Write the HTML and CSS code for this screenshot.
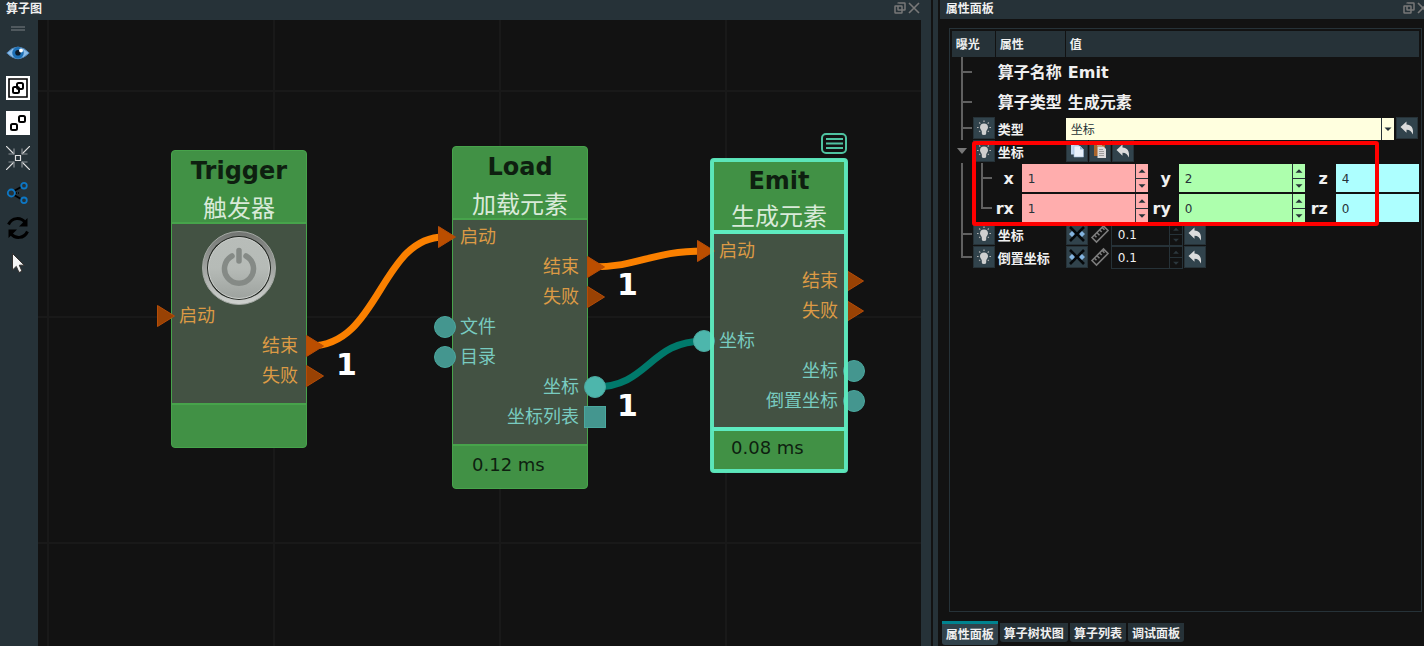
FILE: index.html
```html
<!DOCTYPE html>
<html lang="zh-CN">
<head>
<meta charset="utf-8">
<title>算子图</title>
<link rel="stylesheet" href="styles.css">
</head>
<body>
<svg class="defs" aria-hidden="true">
  <defs>
    <symbol id="restore" viewBox="0 0 12 12"><path d="M4 1.500Q4 1 4.500 1H10.500Q11 1 11 1.500V7.500Q11 8 10.500 8H8M1.500 4H7.500Q8 4 8 4.500V10.500Q8 11 7.500 11H1.500Q1 11 1 10.500V4.500Q1 4 1.500 4ZM4 4V7.500Q4 8 4.500 8H8" fill="none" stroke="#787878" stroke-width="1.500"/></symbol>
    <symbol id="close" viewBox="0 0 12 12"><path d="M1 1L11 11M11 1L1 11" fill="none" stroke="#787878" stroke-width="1.600"/></symbol>
    <symbol id="bulb" viewBox="0 0 22 22"><path d="M11 6.500a4 4 0 0 1 4 4c0 1.700-1.500 2.400-1.800 4v2q0 1.500-2.200 1.500t-2.200-1.500v-2c-.3-1.600-1.800-2.300-1.800-4a4 4 0 0 1 4-4Z" fill="#cfcfcf"/><path d="M11 3.500V5M6.200 5.500L7.300 6.600M15.800 5.500L14.700 6.600M4 10.500H5.600M16.400 10.500H18M6.200 14.800L7.200 13.900M15.800 14.800L14.800 13.900" stroke="#b4b4b4" stroke-width="1.200"/></symbol>
    <symbol id="reply" viewBox="0 0 22 22"><path d="M4.500 10L10.500 4.500V7.500C15 7.500 18 11 16.800 17.500C15.500 14.500 14 12.700 10.500 12.700V15.800Z" fill="#dcdcdc"/></symbol>
    <symbol id="copy" viewBox="0 0 22 22"><path d="M5 3.500h6l2 2v9H5z" fill="#c4d8ee"/><path d="M8 6h6l3.500 3.500V17H8z" fill="#e9f2fb" stroke="#9bb8d6" stroke-width=".6"/><path d="M14 6v3.500h3.500z" fill="#93b2d2"/></symbol>
    <symbol id="paste" viewBox="0 0 22 22"><path d="M5 3.500h11V16H5z" fill="#a8652c"/><path d="M8 2.500h5v3H8z" fill="#d5d5d5"/><path d="M8.500 6.500h6l2.500 2.500V18H8.500z" fill="#dcdcdc"/><path d="M10 9.500h4M10 11.500h5M10 13.500h5M10 15.500h5" stroke="#8e8e8e" stroke-width=".8"/></symbol>
    <symbol id="hidden" viewBox="0 0 22 22"><path d="M3 11l3-3 3 .5v5l-3 .5zM19 11l-3-3-3 .5v5l3 .5z" fill="#84b4df"/><circle cx="11" cy="11" r="2.500" fill="#34648f"/><path d="M4 4L18 18M18 4L4 18" stroke="#05080a" stroke-width="2.600"/></symbol>
    <symbol id="ruler" viewBox="0 0 22 22"><path d="M3 14.500L14.500 3L19 7.500L7.500 19ZM5.500 12.300L7.500 14.300M8 9.700L10.500 12.200M10.700 7L12.700 9M13.200 4.500L15.500 6.800" fill="none" stroke="#7c7c7c" stroke-width="1.600"/></symbol>
    <symbol id="up" viewBox="0 0 12 12"><path d="M2.500 8L6 4.500L9.500 8Z" fill="currentColor"/></symbol>
    <symbol id="down" viewBox="0 0 12 12"><path d="M2.500 4.500H9.500L6 8Z" fill="currentColor"/></symbol>
    <symbol id="tri" viewBox="0 0 18 22"><path d="M.500 .500L17.500 11L.500 21.500Z" fill="currentColor" stroke="#b54d08"/></symbol>
  </defs>
</svg>

<main class="workspace">
  <section class="dock graph-dock">
    <header class="dock-title">
      <h2>算子图</h2>
      <button class="title-btn" aria-label="浮动"><svg><use href="#restore"/></svg></button>
      <button class="title-btn" aria-label="关闭"><svg><use href="#close"/></svg></button>
    </header>
    <div class="graph-body">
      <nav class="toolbar">
        <span class="grip"></span>
        <button class="tool" aria-label="可见性"><svg viewBox="0 0 24 24"><path d="M.8 12Q12 0 23.200 12Q12 23.500 .8 12Z" fill="#8dbde8" stroke="#4f87bb"/><circle cx="12" cy="11.800" r="5.800" fill="#1c6fb5"/><circle cx="12" cy="11.800" r="2.800" fill="#0c1a28"/><circle cx="15" cy="9.500" r="2" fill="#fff"/></svg></button>
        <button class="tool" aria-label="组合"><svg viewBox="0 0 24 24"><path d="M0 0h24v24H0z" fill="#fff"/><g fill="none" stroke="#000" stroke-width="2"><path d="M3 3h18v18H3z" stroke-width="1.600"/><rect x="7" y="11" width="6" height="6" rx="1.500"/><rect x="11" y="7" width="6" height="6" rx="1.500"/></g></svg></button>
        <button class="tool" aria-label="展开"><svg viewBox="0 0 24 24"><path d="M0 0h24v24H0z" fill="#fff"/><g fill="none" stroke="#000" stroke-width="2"><rect x="5" y="13" width="6" height="6" rx="1.500"/><rect x="13" y="5" width="6" height="6" rx="1.500"/></g></svg></button>
        <button class="tool" aria-label="适应窗口"><svg viewBox="0 0 24 24"><g fill="none" stroke="#e0e0e0" stroke-width="1.200"><path d="M9.500 9.500h5v5h-5zM0 0L8 8M24 0L16 8M0 24L8 16M24 24L16 16"/><path d="M8 2.500V8H2.500M16 2.500V8H21.500M8 21.500V16H2.500M16 21.500V16H21.500" stroke="#8a9094"/></g></svg></button>
        <button class="tool" aria-label="连接"><svg viewBox="0 0 24 24"><path d="M8 10L15 6M8 14L15 18" stroke="#000" stroke-width="2"/><path d="M10 12H14" stroke="#000" stroke-width="1.500" stroke-dasharray="1 1"/><g fill="none" stroke="#0d77c4" stroke-width="1.800"><circle cx="5.300" cy="12" r="3.500"/><circle cx="18" cy="4.700" r="2.800"/><circle cx="18" cy="19.300" r="2.800"/></g></svg></button>
        <button class="tool" aria-label="刷新"><svg viewBox="0 0 24 24"><g fill="none" stroke="#000" stroke-width="3"><path d="M2.500 8.500C6 1 15 1 19 6.500"/><path d="M21.500 15.500C18 23 9 23 5 17.500"/></g><path d="M21.500 2V10.500H13ZM2.500 22V13.500H11Z"/></svg></button>
        <button class="tool" aria-label="选择"><svg viewBox="0 0 24 24"><path d="M6.500 2.500V19L10.300 15.400L13 21.500L16 20.200L13.300 14.200H18.300Z" fill="#f5f5f5" stroke="#33302e"/></svg></button>
      </nav>

      <div class="canvas">
        <svg class="wires" aria-hidden="true">
          <g fill="none" stroke-width="7">
            <path d="M272 326C342 326 342 217 406 217" stroke="#fa8000"/>
            <path d="M553 247C603 247 612 231 666 231" stroke="#fa8000"/>
            <path d="M557 367C611 367 611 321 666 321" stroke="#00796b"/>
          </g>
        </svg>

        <article class="node trigger">
          <header class="node-head"><h3>Trigger</h3><p>触发器</p></header>
          <div class="node-body">
            <button class="power" aria-label="触发">
              <svg viewBox="0 0 74 74">
                <defs>
                  <linearGradient id="ring" x2="0" y2="1"><stop offset="0" stop-color="#717471"/><stop offset=".5" stop-color="#a0a3a0"/><stop offset="1" stop-color="#cfd2cf"/></linearGradient>
                  <linearGradient id="face" x2="0" y2="1"><stop offset="0" stop-color="#b8bdb9"/><stop offset=".5" stop-color="#b6bbb7"/><stop offset="1" stop-color="#9ea39f"/></linearGradient>
                </defs>
                <circle cx="37" cy="37" r="36.500" fill="url(#ring)" stroke="#a4a9a4"/>
                <circle cx="37" cy="37" r="32" fill="#232823"/>
                <circle cx="37" cy="37" r="30.500" fill="url(#face)" stroke="#ced1ce"/>
                <path d="M30 25A14.500 14.500 0 1 0 44 25M37 19.500V30" fill="none" stroke="#858a86" stroke-width="5.500" stroke-linecap="round"/>
              </svg>
            </button>
            <div class="port in flow"><svg class="tri"><use href="#tri"/></svg>启动</div>
            <div class="port out flow live">结束<svg class="tri"><use href="#tri"/></svg></div>
            <div class="port out flow">失败<svg class="tri"><use href="#tri"/></svg></div>
          </div>
          <footer class="node-foot"></footer>
        </article>

        <article class="node load">
          <header class="node-head"><h3>Load</h3><p>加载元素</p></header>
          <div class="node-body">
            <div class="port in flow live"><svg class="tri"><use href="#tri"/></svg>启动</div>
            <div class="port out flow live">结束<svg class="tri"><use href="#tri"/></svg></div>
            <div class="port out flow">失败<svg class="tri"><use href="#tri"/></svg></div>
            <div class="port in data"><i class="dot"></i>文件</div>
            <div class="port in data"><i class="dot"></i>目录</div>
            <div class="port out data live">坐标<i class="dot"></i></div>
            <div class="port out data">坐标列表<i class="dot square"></i></div>
          </div>
          <footer class="node-foot">0.12 ms</footer>
        </article>

        <article class="node emit">
          <header class="node-head"><h3>Emit</h3><p>生成元素</p></header>
          <div class="node-body">
            <div class="port in flow live"><svg class="tri"><use href="#tri"/></svg>启动</div>
            <div class="port out flow">结束<svg class="tri"><use href="#tri"/></svg></div>
            <div class="port out flow">失败<svg class="tri"><use href="#tri"/></svg></div>
            <div class="port in data live"><i class="dot"></i>坐标</div>
            <div class="port out data">坐标<i class="dot"></i></div>
            <div class="port out data">倒置坐标<i class="dot"></i></div>
          </div>
          <footer class="node-foot">0.08 ms</footer>
        </article>

        <button class="node-menu" aria-label="节点菜单"><svg viewBox="0 0 26 22"><rect x="1" y="1" width="24" height="19" rx="4" fill="none" stroke="#4fc3a1" stroke-width="2"/><path d="M5 6H22M5 10.500H22M5 15H22" stroke="#4fc3a1" stroke-width="2"/></svg></button>
        <span class="count c1">1</span>
        <span class="count c2">1</span>
        <span class="count c3">1</span>
      </div>
    </div>
  </section>

  <div class="splitter"></div>

  <section class="dock prop-dock">
    <header class="dock-title">
      <h2>属性面板</h2>
      <button class="title-btn" aria-label="浮动"><svg><use href="#restore"/></svg></button>
      <button class="title-btn" aria-label="关闭"><svg><use href="#close"/></svg></button>
    </header>
    <div class="prop-frame">
      <table class="props">
        <thead>
          <tr><th>曝光</th><th>属性</th><th>值</th></tr>
        </thead>
        <tbody>
          <tr class="big"><td></td><td>算子名称</td><td>Emit</td></tr>
          <tr class="big"><td></td><td>算子类型</td><td>生成元素</td></tr>
          <tr>
            <td class="expose"><button class="btn" aria-label="曝光类型"><svg><use href="#bulb"/></svg></button></td>
            <td><label for="kind">类型</label></td>
            <td class="tools">
              <span class="combo"><select id="kind"><option>坐标</option></select><svg><use href="#down"/></svg></span>
              <button class="btn" aria-label="重置"><svg><use href="#reply"/></svg></button>
            </td>
          </tr>
          <tr>
            <td class="expose"><button class="btn" aria-label="曝光坐标"><svg><use href="#bulb"/></svg></button></td>
            <td>坐标</td>
            <td class="tools">
              <button class="btn" aria-label="复制"><svg><use href="#copy"/></svg></button>
              <button class="btn" aria-label="粘贴"><svg><use href="#paste"/></svg></button>
              <button class="btn" aria-label="重置"><svg><use href="#reply"/></svg></button>
            </td>
          </tr>
          <tr class="vector">
            <td colspan="3">
              <label for="x">x</label><span class="spin red"><input id="x" value="1"><button aria-label="增加"><svg><use href="#up"/></svg></button><button aria-label="减少"><svg><use href="#down"/></svg></button></span>
              <label for="y">y</label><span class="spin green"><input id="y" value="2"><button aria-label="增加"><svg><use href="#up"/></svg></button><button aria-label="减少"><svg><use href="#down"/></svg></button></span>
              <label for="z">z</label><span class="spin cyan"><input id="z" value="4"><button aria-label="增加"><svg><use href="#up"/></svg></button><button aria-label="减少"><svg><use href="#down"/></svg></button></span>
            </td>
          </tr>
          <tr class="vector">
            <td colspan="3">
              <label for="rx">rx</label><span class="spin red"><input id="rx" value="1"><button aria-label="增加"><svg><use href="#up"/></svg></button><button aria-label="减少"><svg><use href="#down"/></svg></button></span>
              <label for="ry">ry</label><span class="spin green"><input id="ry" value="0"><button aria-label="增加"><svg><use href="#up"/></svg></button><button aria-label="减少"><svg><use href="#down"/></svg></button></span>
              <label for="rz">rz</label><span class="spin cyan"><input id="rz" value="0"><button aria-label="增加"><svg><use href="#up"/></svg></button><button aria-label="减少"><svg><use href="#down"/></svg></button></span>
            </td>
          </tr>
          <tr>
            <td class="expose"><button class="btn" aria-label="曝光坐标输出"><svg><use href="#bulb"/></svg></button></td>
            <td><label for="pose">坐标</label></td>
            <td class="tools">
              <button class="btn" aria-label="隐藏"><svg><use href="#hidden"/></svg></button>
              <button class="btn plain" aria-label="尺寸"><svg><use href="#ruler"/></svg></button>
              <span class="spin dark"><input id="pose" value="0.1"><button aria-label="增加"><svg><use href="#up"/></svg></button><button aria-label="减少"><svg><use href="#down"/></svg></button></span>
              <button class="btn" aria-label="重置"><svg><use href="#reply"/></svg></button>
            </td>
          </tr>
          <tr>
            <td class="expose"><button class="btn" aria-label="曝光倒置坐标"><svg><use href="#bulb"/></svg></button></td>
            <td><label for="inv">倒置坐标</label></td>
            <td class="tools">
              <button class="btn" aria-label="隐藏"><svg><use href="#hidden"/></svg></button>
              <button class="btn plain" aria-label="尺寸"><svg><use href="#ruler"/></svg></button>
              <span class="spin dark"><input id="inv" value="0.1"><button aria-label="增加"><svg><use href="#up"/></svg></button><button aria-label="减少"><svg><use href="#down"/></svg></button></span>
              <button class="btn" aria-label="重置"><svg><use href="#reply"/></svg></button>
            </td>
          </tr>
        </tbody>
      </table>
      <svg class="branches" viewBox="0 0 44 212" aria-hidden="true"><path d="M10 0V83M10 15H20M10 45H20M10 71H20M10 106V200H20M10 177H20M30 106V151H40M30 121H40" fill="none" stroke="#606060" stroke-width="2"/><path d="M5 91H15L10 97Z" fill="#777"/></svg>
      <div class="highlight"></div>
    </div>
    <nav class="tabs">
      <button class="tab active">属性面板</button>
      <button class="tab">算子树状图</button>
      <button class="tab">算子列表</button>
      <button class="tab">调试面板</button>
    </nav>
  </section>
</main>
</body>
</html>
```

FILE: styles.css
```css
* { box-sizing: border-box; }

body {
  margin: 0;
  background: #121212;
  color: #f0f0f0;
  font: 12px "DejaVu Sans", "Noto Sans CJK SC", sans-serif;
}

button, input, select {
  margin: 0;
  padding: 0;
  border: 0;
  background: none;
  color: inherit;
  font: inherit;
}

svg { display: block; }
h2, h3, p { margin: 0; }
.defs { position: absolute; width: 0; height: 0; }

.workspace { display: flex; height: 100vh; overflow: hidden; }
.dock { display: flex; flex-direction: column; min-width: 0; }
.graph-dock { flex: 1; background: #263238; }
.prop-dock { width: 34%; overflow: hidden; }

.splitter {
  width: 9px;
  border: solid #121212;
  border-width: 0 2px;
  background: #263238;
}

.dock-title {
  display: flex;
  align-items: flex-start;
  gap: 2px;
  height: 20px;
  flex: none;
  padding: 0 11px 0 6px;
  background: #263238;
}
.dock-title h2 { flex: 1; font-size: 12px; line-height: 18px; }
.title-btn { flex: none; padding-top: 2px; }
.title-btn svg { width: 12px; height: 12px; }
.prop-dock .dock-title { height: 19px; padding: 0 0 0 6px; margin-right: -5px; }

/* Graph */
.graph-body { display: flex; flex: 1; min-height: 0; }
.toolbar {
  display: flex;
  flex-direction: column;
  align-items: center;
  gap: 11px;
  width: 38px;
  padding: 6px 2px 0 0;
}
.grip { width: 14px; height: 5px; flex: none; margin-bottom: -1px; border: solid #50595e; border-width: 2px 0; }
.tool { flex: none; }
.tool svg { width: 24px; height: 24px; }

.canvas {
  position: relative;
  flex: 1;
  margin-right: 10px;
  overflow: hidden;
  background-color: #121212;
  background-image:
    linear-gradient(to right, #191919 2px, transparent 2px),
    linear-gradient(#191919 2px, transparent 2px);
  background-size: 226px 226px;
  background-position: 9px 70px;
}
.wires { position: absolute; inset: 0; width: 100%; height: 100%; }

.node {
  position: absolute;
  width: 136px;
  border: 1px solid #47a34b;
  border-radius: 4px;
  background: #419145;
}
.trigger { left: 133px; top: 130px; }
.load { left: 414px; top: 126px; }
.emit { left: 673px; top: 139px; }

.node-head { border-bottom: 2px solid #47a34b; text-align: center; }
.node-head h3 { color: #0e1f10; font-size: 24px; line-height: 40px; }
.node-head p { margin-bottom: -5px; color: #d9ead9; font-size: 24px; line-height: 36px; }
.node-body { padding: 2px 0 12px; background: #435243; }
.node-foot {
  height: 44px;
  padding-left: 19px;
  border-top: 2px solid #47a34b;
  color: #0e1f10;
  font-size: 18px;
  line-height: 38px;
}
.power { display: block; margin: 0 auto; padding-top: 5px; height: 75px; }
.power svg { width: 74px; height: 74px; }

.port { position: relative; height: 30px; padding: 0 8px 0 7px; font-size: 18px; line-height: 30px; }
.out { text-align: right; }
.flow { color: #dc9a45; }
.data { color: #78cbc0; }
.tri { position: absolute; top: 4px; width: 18px; height: 22px; color: #994204; }
.live .tri { color: #bb4e00; }
.in .tri { left: -15px; }
.out .tri { left: 100%; }
.dot {
  position: absolute;
  top: 4px;
  width: 22px;
  height: 22px;
  border: 1px solid #4aa79e;
  border-radius: 50%;
  background: #44968f;
}
.live .dot { background: #4db6ac; }
.in .dot { left: -19px; }
.out .dot { right: -19px; }
.square { border-radius: 0; }

.emit::after {
  content: "";
  position: absolute;
  inset: -2px;
  border: 4px solid #5eebc0;
  border-radius: 4px;
  opacity: .95;
  pointer-events: none;
}
.emit .node-head { border-bottom: 4px solid #5eebc0; }
.emit .node-head h3 { line-height: 42px; }
.emit .node-head p { margin-bottom: -2px; line-height: 30px; }
.emit .node-body { padding-bottom: 11px; }
.emit .node-foot { border-top: 4px solid #5eebc0; line-height: 34px; }

.node-menu { position: absolute; left: 783px; top: 113px; }
.node-menu svg { width: 26px; height: 22px; }
.count { position: absolute; color: #fff; font-size: 30px; font-weight: bold; line-height: 36px; }
.c1 { left: 298px; top: 327px; }
.c2 { left: 579px; top: 247px; }
.c3 { left: 579px; top: 368px; }

/* Properties */
.prop-frame {
  position: relative;
  flex: 1;
  min-height: 0;
  margin: 9px 2px 0 9px;
  padding: 2px;
  border: 1px solid #263238;
}
.props, .props thead, .props tbody { display: block; }
.props tr {
  display: grid;
  grid-template-columns: 44px 70px 1fr;
  height: 23px;
  font-size: 13px;
  font-weight: bold;
}
.props td { min-width: 0; padding: 0 0 0 2px; line-height: 25px; white-space: nowrap; }
.props thead tr { height: 26px; column-gap: 1px; grid-template-columns: 43px 69px 1fr; }
.props th { height: 26px; padding: 0 4px; background: #263238; font-size: 12px; line-height: 28px; text-align: left; }
.props .big { height: 30px; font-size: 16px; }
.props .big td { line-height: 32px; }
.props .expose { display: flex; align-items: flex-start; justify-content: flex-end; padding-right: 1px; }
.props .tools { display: flex; align-items: flex-start; gap: 1px; padding: 0 1px 0 0; font-weight: normal; }

.btn { flex: none; width: 22px; height: 22px; border: 1px solid #263238; background: #31434c; }
.btn svg { width: 22px; height: 22px; margin: -1px; }
.plain { border-color: transparent; background: none; }

.combo { position: relative; flex: 1; display: flex; height: 22px; margin: 1px 1px 0 0; color: #263238; background: #ffffdf; }
.combo select { appearance: none; flex: 1; padding: 2px 0 0 5px; font-size: 12px; line-height: 20px; }
.combo svg { position: absolute; right: 0; width: 13px; height: 22px; border-left: 1px solid #263238; pointer-events: none; }

.props .vector { display: block; height: 30px; }
.vector td { display: flex; align-items: center; padding: 0 0 0 39px; overflow: hidden; height: 30px; }
.vector label { flex: none; width: 23px; margin-right: 8px; font-size: 16px; text-align: right; }

.spin {
  flex: none;
  display: grid;
  grid-template: 1fr 1fr / 1fr 12px;
  gap: 1px;
  width: 126px;
  height: 28px;
  background: #263238;
  color: #263238;
}
.spin input { grid-row: span 2; width: 100%; padding: 2px 0 0 6px; font-weight: normal; font-size: 12px; }
.spin svg { width: 12px; height: 100%; }
.spin button { min-height: 0; overflow: hidden; }
.red > input, .red > button { background: #ffadad; }
.green > input, .green > button { background: #adffad; }
.cyan > input, .cyan > button { background: #adffff; }
.spin.dark { width: 72px; height: 23px; border: 1px solid #263238; margin-left: -1px; }
.dark > input, .dark > button { background: #121212; }
.dark > input { color: #f0f0f0; }
.dark > button { color: #2c383e; }

.branches { position: absolute; left: 2px; top: 28px; width: 44px; height: 212px; }
.highlight {
  position: absolute;
  left: 22px;
  top: 112px;
  width: 407px;
  height: 85px;
  border: 4px solid #f00;
  border-radius: 3px;
  pointer-events: none;
}

.tabs { display: flex; gap: 2px; height: 34px; flex: none; padding: 9px 0 0 2px; align-items: flex-start; }
.tab { height: 19px; margin-top: 2px; padding: 1px 4px 0; border-radius: 0 0 3px 3px; background: #263238; font-weight: bold; line-height: 20px; }
.tab.active { height: 24px; margin-top: 0; border-top: 3px solid #00838f; background: #31434c; line-height: 21px; }
```
